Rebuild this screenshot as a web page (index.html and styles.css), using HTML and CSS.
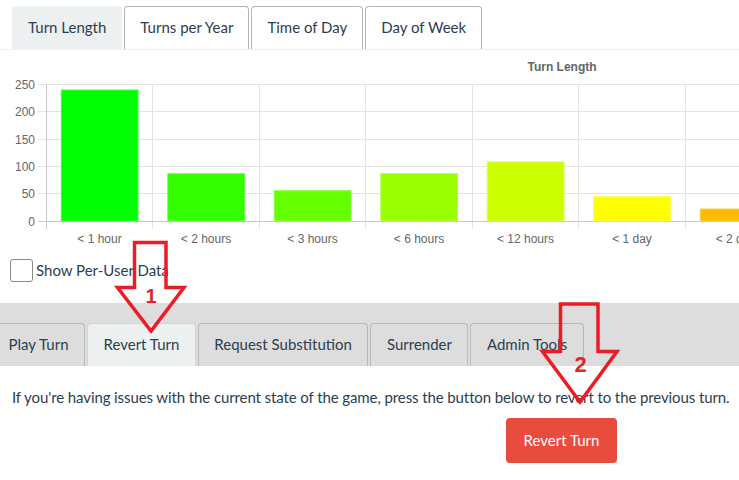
FILE: index.html
```html
<!DOCTYPE html>
<html>
<head>
<meta charset="utf-8">
<link rel="stylesheet" href="styles.css">
</head>
<body>
<ul class="tabs top-tabs">
  <li class="tab active">Turn Length</li>
  <li class="tab">Turns per Year</li>
  <li class="tab">Time of Day</li>
  <li class="tab">Day of Week</li>
</ul>

<svg class="chart" width="739" height="200" viewBox="0 0 739 200">
  <text class="title" x="562" y="21" text-anchor="middle">Turn Length</text>
  <g class="grid">
    <line x1="38" x2="739" y1="34.5" y2="34.5"/>
    <line x1="38" x2="739" y1="61.5" y2="61.5"/>
    <line x1="38" x2="739" y1="89.5" y2="89.5"/>
    <line x1="38" x2="739" y1="116.5" y2="116.5"/>
    <line x1="38" x2="739" y1="143.5" y2="143.5"/>
    <line x1="152.5" x2="152.5" y1="34.5" y2="179"/>
    <line x1="259.5" x2="259.5" y1="34.5" y2="179"/>
    <line x1="365.5" x2="365.5" y1="34.5" y2="179"/>
    <line x1="472.5" x2="472.5" y1="34.5" y2="179"/>
    <line x1="578.5" x2="578.5" y1="34.5" y2="179"/>
    <line x1="685.5" x2="685.5" y1="34.5" y2="179"/>
  </g>
  <g class="axis">
    <line x1="46.5" x2="46.5" y1="34.5" y2="179"/>
    <line x1="38" x2="739" y1="171.5" y2="171.5"/>
  </g>
  <g class="bars">
    <rect x="61.3" y="40" width="76.7" height="131" fill="#00ff00" stroke="#44ff44"/>
    <rect x="167.8" y="123.7" width="76.7" height="47.3" fill="#33ff00" stroke="#66ff44"/>
    <rect x="274.3" y="140.7" width="76.7" height="30.3" fill="#66ff00" stroke="#88ff44"/>
    <rect x="380.8" y="123.7" width="76.7" height="47.3" fill="#99ff00" stroke="#aaff44"/>
    <rect x="487.3" y="112" width="76.7" height="59" fill="#ccff00" stroke="#ddff44"/>
    <rect x="593.8" y="146.7" width="76.7" height="24.3" fill="#ffff00" stroke="#ffff55"/>
    <rect x="700.3" y="159" width="76.7" height="12" fill="#ffbb00" stroke="#ffcc44"/>
  </g>
  <g class="ylabels">
    <text x="35" y="38.5">250</text>
    <text x="35" y="65.5">200</text>
    <text x="35" y="93.5">150</text>
    <text x="35" y="120.5">100</text>
    <text x="35" y="147.5">50</text>
    <text x="35" y="175.5">0</text>
  </g>
  <g class="xlabels">
    <text x="99.5" y="193">&lt; 1 hour</text>
    <text x="206" y="193">&lt; 2 hours</text>
    <text x="312.5" y="193">&lt; 3 hours</text>
    <text x="419" y="193">&lt; 6 hours</text>
    <text x="525.5" y="193">&lt; 12 hours</text>
    <text x="632" y="193">&lt; 1 day</text>
    <text x="738.5" y="193">&lt; 2 days</text>
  </g>
</svg>

<label class="check-row"><input type="checkbox" class="check"><span>Show Per-User Data</span></label>

<div class="action-bar">
  <ul class="tabs bottom-tabs">
    <li class="tab">Play Turn</li>
    <li class="tab active">Revert Turn</li>
    <li class="tab">Request Substitution</li>
    <li class="tab">Surrender</li>
    <li class="tab">Admin Tools</li>
  </ul>
</div>

<p class="info">If you're having issues with the current state of the game, press the button below to revert to the previous turn.</p>
<button class="btn-danger">Revert Turn</button>

<svg class="annotations" width="739" height="480" viewBox="0 0 739 480">
  <polygon points="134.5,242.5 166,242.5 166,287.5 184,287.5 151,331 117.5,287.5 134.5,287.5"/>
  <text x="151" y="303" class="n1">1</text>
  <polygon points="560.5,304 598,304 598,351.5 617,351.5 580,402 542.5,351.5 560.5,351.5"/>
  <text x="580.5" y="372" class="n2">2</text>
</svg>
</body>
</html>
```

FILE: styles.css
```css
* { box-sizing: border-box; }
html, body { margin: 0; padding: 0; }
body {
  position: relative;
  width: 739px;
  height: 480px;
  overflow: hidden;
  background: #fff;
  font-family: Lato, "Open Sans", sans-serif;
  font-size: 15px;
  line-height: 21px;
  color: #2c3e50;
}
.tabs {
  list-style: none;
  margin: 0;
  padding: 0;
  display: flex;
  gap: 2px;
}
.tab {
  padding: 10px 15px;
  line-height: 21px;
  border: 1px solid #b4b4b4;
  border-bottom: none;
  border-radius: 4px 4px 0 0;
  white-space: nowrap;
  height: 43px;
}
.top-tabs {
  padding: 6px 12px 0;
  border-bottom: 1px solid #ecf0f1;
}
.top-tabs .tab { background: #fff; }
.top-tabs .tab.active { background: #ecf0f1; border-color: #ecf0f1; }

.chart { display: block; }
.chart .title { font: bold 12px "Liberation Sans", Arial, sans-serif; fill: #666; }
.chart .grid line { stroke: #e3e3e3; stroke-width: 1; }
.chart .axis line { stroke: #c8c8c8; stroke-width: 1; }
.chart .bars rect { stroke-width: 1; }
.chart .ylabels text { font: 12px "Liberation Sans", Arial, sans-serif; fill: #666; text-anchor: end; }
.chart .xlabels text { font: 12px "Liberation Sans", Arial, sans-serif; fill: #666; text-anchor: middle; }

.check-row {
  display: flex;
  align-items: center;
  gap: 3px;
  margin: 9px 0 0 10px;
  height: 23px;
  font-size: 15px;
}
.check {
  appearance: none;
  -webkit-appearance: none;
  margin: 0;
  width: 23px;
  height: 23px;
  border: 1px solid #8a8a8a;
  border-radius: 3px;
  background: #fff;
}

.action-bar {
  margin-top: 21px;
  background: #dddddd;
  padding-top: 20px;
  height: 63px;
}
.bottom-tabs { margin-left: -8px; }
.bottom-tabs .tab { background: #dddddd; border-color: #b9b9b9; padding: 10px 15.5px; }
.bottom-tabs .tab.active { background: #ecf0f1; border-color: #d0d4d6; }

.info {
  margin: 21px 0 0 12px;
  white-space: nowrap;
  letter-spacing: -0.1px;
}
.btn-danger {
  display: block;
  margin: 10px 0 0 506px;
  padding: 10px 15px;
  border: 2px solid #e74c3c;
  border-radius: 4px;
  background: #e74c3c;
  color: #fff;
  font-family: Lato, "Open Sans", sans-serif;
  font-size: 15px;
  line-height: 21px;
  width: 111px;
  height: 45px;
}

.annotations {
  position: absolute;
  left: 0;
  top: 0;
  pointer-events: none;
}
.annotations polygon {
  fill: none;
  stroke: #ed1c24;
  stroke-width: 3.5;
  stroke-linejoin: miter;
}
.annotations text {
  font-family: "Liberation Sans", Arial, sans-serif;
  font-weight: bold;
  fill: #e3242b;
  text-anchor: middle;
}
.annotations .n1 { font-size: 20px; }
.annotations .n2 { font-size: 22px; }
```
